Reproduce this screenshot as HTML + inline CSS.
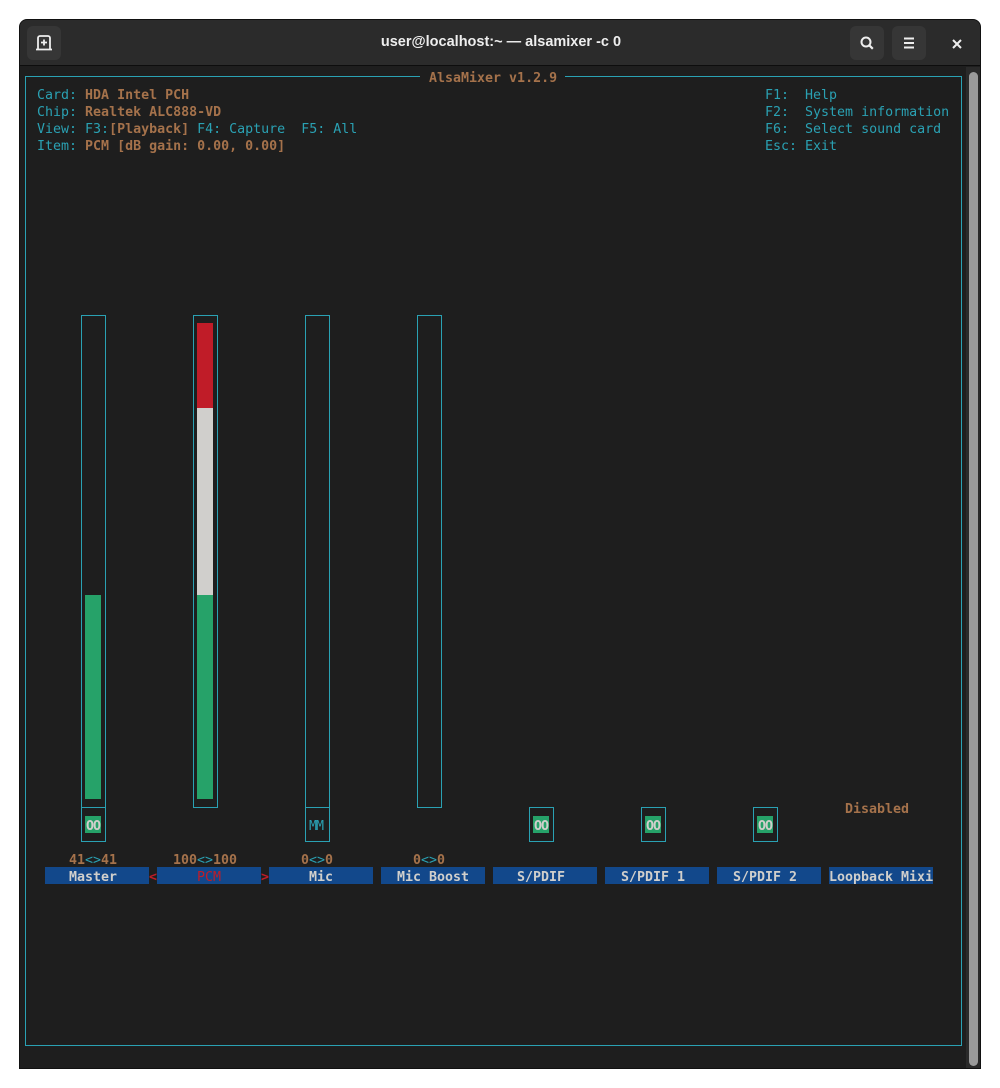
<!DOCTYPE html>
<html><head><meta charset="utf-8"><style>
*{margin:0;padding:0;box-sizing:border-box}
body{width:1000px;height:1088px;background:#fff;position:relative;overflow:hidden;font-family:"DejaVu Sans Mono","Liberation Mono",monospace}
.win{position:absolute;left:19px;top:19px;width:962px;height:1050px;background:#1e1e1e;border:1px solid #111;border-radius:8px 8px 0 0;overflow:hidden}
.hdr{position:absolute;left:0;top:0;width:962px;height:46px;background:#2b2b2b;border-bottom:1px solid #0d0d0d}
.btn{position:absolute;top:6px;width:34px;height:34px;background:#363636;border-radius:6px}
.ttl{position:absolute;left:0;width:962px;top:14px;text-align:center;color:#eee;font:bold 14.5px "Liberation Sans",sans-serif}
.t{position:absolute;font-size:13.3px;line-height:17px;white-space:pre;height:17px;padding-top:2px;box-sizing:content-box}
.c{color:#2aa1b3}.b{color:#a5724b;font-weight:bold}
.ln{position:absolute;background:#2aa1b3}
.f{position:absolute}
.nm{position:absolute;height:17px;width:104px;background:#12488b;color:#d0cfcc;font-weight:bold;font-size:13.3px;line-height:17px;white-space:pre;padding-top:2px;overflow:visible}
.v{position:absolute;font-size:13.3px;line-height:17px;font-weight:bold;color:#a5724b;white-space:pre;padding-top:2px}
.oo{position:absolute;width:16px;height:17px;background:#26a269;color:#d0cfcc;font-size:13.3px;line-height:17px;font-weight:bold;text-align:center;letter-spacing:-1px;padding-top:2px}
</style></head><body>
<div class="win">
 <div class="hdr">
  <div class="btn" style="left:7px"><svg width="34" height="34" viewBox="0 0 34 34"><path d="M11 23V12a2 2 0 0 1 2-2h8a2 2 0 0 1 2 2v11M9 23.5h16" stroke="#eee" stroke-width="1.8" fill="none"/><path d="M17 13.5v6M14 16.5h6" stroke="#eee" stroke-width="1.8"/></svg></div>
  <div class="ttl">user@localhost:~ — alsamixer -c 0</div>
  <div class="btn" style="left:830px"><svg width="34" height="34" viewBox="0 0 34 34"><circle cx="16" cy="16" r="4.5" stroke="#eee" stroke-width="2" fill="none"/><path d="M19.3 19.3l3.5 3.5" stroke="#eee" stroke-width="2.2"/></svg></div>
  <div class="btn" style="left:872px"><svg width="34" height="34" viewBox="0 0 34 34"><path d="M12 12.5h10M12 17h10M12 21.5h10" stroke="#eee" stroke-width="2"/></svg></div>
  <svg style="position:absolute;left:931px;top:18px" width="12" height="12" viewBox="0 0 12 12"><path d="M2 2l8 8M10 2l-8 8" stroke="#eee" stroke-width="2"/></svg>
 </div>
 <div style="position:absolute;left:946px;top:47px;width:16px;height:1003px;background:#2a2a2a"></div>
 <div style="position:absolute;left:949px;top:52px;width:9px;height:994px;background:#9a9a9a;border-radius:5px"></div>
</div>
<div class="ln" style="left:25px;top:76px;width:395px;height:1px"></div>
<div class="ln" style="left:565px;top:76px;width:397px;height:1px"></div>
<div class="ln" style="left:25px;top:1045px;width:937px;height:1px"></div>
<div class="ln" style="left:25px;top:76px;width:1px;height:970px"></div>
<div class="ln" style="left:961px;top:76px;width:1px;height:970px"></div>
<div class="t b" style="left:429px;top:68px">AlsaMixer v1.2.9</div>
<div class="t" style="left:37px;top:85px"><span class="c">Card: </span><span class="b">HDA Intel PCH</span></div>
<div class="t" style="left:37px;top:102px"><span class="c">Chip: </span><span class="b">Realtek ALC888-VD</span></div>
<div class="t" style="left:37px;top:119px"><span class="c">View: F3:</span><span class="b">[Playback]</span><span class="c"> F4: Capture  F5: All</span></div>
<div class="t" style="left:37px;top:136px"><span class="c">Item: </span><span class="b">PCM [dB gain: 0.00, 0.00]</span></div>
<div class="t c" style="left:765px;top:85px">F1:  Help</div>
<div class="t c" style="left:765px;top:102px">F2:  System information</div>
<div class="t c" style="left:765px;top:119px">F6:  Select sound card</div>
<div class="t c" style="left:765px;top:136px">Esc: Exit</div>

<div class="ln" style="left:81px;top:315px;width:25px;height:1px"></div>
<div class="ln" style="left:81px;top:315px;width:1px;height:527px"></div>
<div class="ln" style="left:105px;top:315px;width:1px;height:527px"></div>
<div class="ln" style="left:81px;top:807px;width:25px;height:1px"></div>
<div class="ln" style="left:81px;top:841px;width:25px;height:1px"></div>
<div class="f" style="left:85px;top:595px;width:16px;height:204px;background:#26a269"></div>
<div class="oo" style="left:85px;top:816px">OO</div>

<div class="ln" style="left:193px;top:315px;width:25px;height:1px"></div>
<div class="ln" style="left:193px;top:315px;width:1px;height:493px"></div>
<div class="ln" style="left:217px;top:315px;width:1px;height:493px"></div>
<div class="ln" style="left:193px;top:807px;width:25px;height:1px"></div>
<div class="f" style="left:197px;top:323px;width:16px;height:85px;background:#c01c28"></div>
<div class="f" style="left:197px;top:408px;width:16px;height:187px;background:#d0cfcc"></div>
<div class="f" style="left:197px;top:595px;width:16px;height:204px;background:#26a269"></div>

<div class="ln" style="left:305px;top:315px;width:25px;height:1px"></div>
<div class="ln" style="left:305px;top:315px;width:1px;height:527px"></div>
<div class="ln" style="left:329px;top:315px;width:1px;height:527px"></div>
<div class="ln" style="left:305px;top:807px;width:25px;height:1px"></div>
<div class="ln" style="left:305px;top:841px;width:25px;height:1px"></div>
<div class="t c" style="left:309px;top:816px;letter-spacing:-1px">MM</div>

<div class="ln" style="left:417px;top:315px;width:25px;height:1px"></div>
<div class="ln" style="left:417px;top:315px;width:1px;height:493px"></div>
<div class="ln" style="left:441px;top:315px;width:1px;height:493px"></div>
<div class="ln" style="left:417px;top:807px;width:25px;height:1px"></div>

<div class="ln" style="left:529px;top:807px;width:25px;height:1px"></div><div class="ln" style="left:529px;top:841px;width:25px;height:1px"></div><div class="ln" style="left:529px;top:807px;width:1px;height:35px"></div><div class="ln" style="left:553px;top:807px;width:1px;height:35px"></div><div class="oo" style="left:533px;top:816px">OO</div>
<div class="ln" style="left:641px;top:807px;width:25px;height:1px"></div><div class="ln" style="left:641px;top:841px;width:25px;height:1px"></div><div class="ln" style="left:641px;top:807px;width:1px;height:35px"></div><div class="ln" style="left:665px;top:807px;width:1px;height:35px"></div><div class="oo" style="left:645px;top:816px">OO</div>
<div class="ln" style="left:753px;top:807px;width:25px;height:1px"></div><div class="ln" style="left:753px;top:841px;width:25px;height:1px"></div><div class="ln" style="left:753px;top:807px;width:1px;height:35px"></div><div class="ln" style="left:777px;top:807px;width:1px;height:35px"></div><div class="oo" style="left:757px;top:816px">OO</div>
<div class="t b" style="left:845px;top:799px">Disabled</div>

<div class="v" style="left:69px;top:850px">41<span class="c" style="font-weight:normal">&lt;&gt;</span>41</div>
<div class="v" style="left:173px;top:850px">100<span class="c" style="font-weight:normal">&lt;&gt;</span>100</div>
<div class="v" style="left:301px;top:850px">0<span class="c" style="font-weight:normal">&lt;&gt;</span>0</div>
<div class="v" style="left:413px;top:850px">0<span class="c" style="font-weight:normal">&lt;&gt;</span>0</div>

<div class="nm" style="left:45px;top:867px;padding-left:24px">Master</div>
<div class="t" style="left:149px;top:867px;color:#c01c28;font-weight:bold">&lt;</div>
<div class="nm" style="left:157px;top:867px;color:#c01c28;font-weight:normal;padding-left:40px">PCM</div>
<div class="t" style="left:261px;top:867px;color:#c01c28;font-weight:bold">&gt;</div>
<div class="nm" style="left:269px;top:867px;padding-left:40px">Mic</div>
<div class="nm" style="left:381px;top:867px;padding-left:16px">Mic Boost</div>
<div class="nm" style="left:493px;top:867px;padding-left:24px">S/PDIF</div>
<div class="nm" style="left:605px;top:867px;padding-left:16px">S/PDIF 1</div>
<div class="nm" style="left:717px;top:867px;padding-left:16px">S/PDIF 2</div>
<div class="nm" style="left:829px;top:867px">Loopback Mixi</div>
</body></html>
